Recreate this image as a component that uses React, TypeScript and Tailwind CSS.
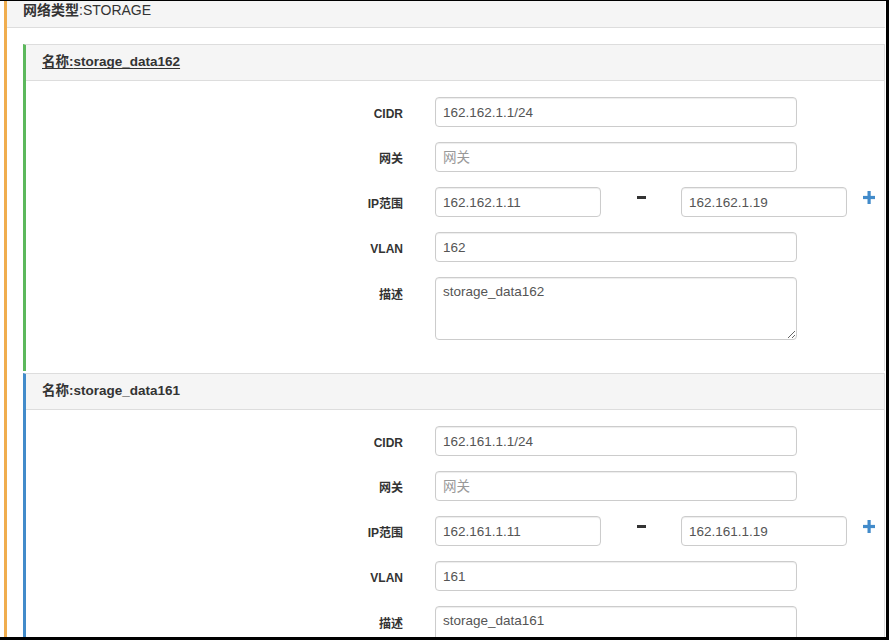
import { ReactNode } from 'react';

interface NetPanel {
  name: string;
  accent: string;
  cidr: string;
  ipStart: string;
  ipEnd: string;
  vlan: string;
  desc: string;
  underline?: boolean;
}

const PANELS: NetPanel[] = [
  {
    name: 'storage_data162',
    accent: 'border-[#5cb85c]',
    cidr: '162.162.1.1/24',
    ipStart: '162.162.1.11',
    ipEnd: '162.162.1.19',
    vlan: '162',
    desc: 'storage_data162',
    underline: true,
  },
  {
    name: 'storage_data161',
    accent: 'border-[#428bca]',
    cidr: '162.161.1.1/24',
    ipStart: '162.161.1.11',
    ipEnd: '162.161.1.19',
    vlan: '161',
    desc: 'storage_data161',
  },
];

const inputCls =
  'h-[30px] rounded-[4px] border border-[#ccc] bg-white px-[7px] text-[13.5px] text-[#555] outline-none shadow-[inset_0_1px_1px_rgba(0,0,0,0.075)] placeholder:text-[#999]';

function Row({ label, children, top }: { label: string; children: ReactNode; top?: boolean }) {
  return (
    <div className={`flex ${top ? 'items-start' : 'items-center'}`}>
      <label
        className={`w-[377px] shrink-0 text-right text-[12px] font-bold text-[#333] ${top ? 'pt-[9px]' : 'pt-[3px]'}`}
      >
        {label}
      </label>
      <div className="ml-[32px] flex items-start">{children}</div>
    </div>
  );
}

function PlusIcon() {
  return (
    <svg width="12" height="13" viewBox="0 0 12 13" className="block">
      <rect x="4.5" y="0" width="3.2" height="13" fill="#428bca" />
      <rect x="0" y="4.9" width="12" height="3.2" fill="#428bca" />
    </svg>
  );
}

function SubnetPanel({ p }: { p: NetPanel }) {
  return (
    <div className={`mb-[2px] border-l-[3px] ${p.accent} border-t border-t-[#ddd] border-r border-r-[#ddd] bg-white`}>
      <div className="flex h-[36px] items-center border-b border-[#ddd] bg-[#f5f5f5] pl-4 text-[13.5px] font-bold text-[#333]">
        <span className={p.underline ? 'underline underline-offset-2' : ''}>名称:{p.name}</span>
      </div>
      <div className="flex flex-col gap-[15px] pb-[31px] pt-4">
        <Row label="CIDR">
          <input className={`${inputCls} w-[362px]`} defaultValue={p.cidr} />
        </Row>
        <Row label="网关">
          <input className={`${inputCls} w-[362px]`} placeholder="网关" />
        </Row>
        <Row label="IP范围">
          <input className={`${inputCls} w-[166px]`} defaultValue={p.ipStart} />
          <div className="flex w-[80px] justify-center pt-[9px]">
            <div className="h-[3px] w-[9px] bg-[#333]" />
          </div>
          <input className={`${inputCls} w-[166px]`} defaultValue={p.ipEnd} />
          <div className="ml-[16px] pt-[4px]">
            <PlusIcon />
          </div>
        </Row>
        <Row label="VLAN">
          <input className={`${inputCls} w-[362px]`} defaultValue={p.vlan} />
        </Row>
        <Row label="描述" top>
          <textarea
            className={`${inputCls} h-[63px] w-[362px] resize-y py-[5px] leading-[18px]`}
            defaultValue={p.desc}
          />
        </Row>
      </div>
    </div>
  );
}

export default function App() {
  return (
    <div
      className="h-[640px] w-[889px] overflow-hidden bg-black pb-[3px] pr-[3px] pt-px"
      style={{ fontFamily: '"Liberation Sans", Arial, "Noto Sans CJK SC", sans-serif' }}
    >
      <div className="h-full overflow-hidden bg-white pl-[4px] pr-[1px]">
        <div className="h-full border-l-[3px] border-[#f0ad4e]">
          <div className="h-[27px] border-b border-[#ddd] bg-[#f5f5f5] pl-4 text-[14px] leading-[18px] text-[#333]">
            <span className="font-bold">网络类型</span>:STORAGE
          </div>
          <div className="pl-4 pt-4">
            {PANELS.map((p) => (
              <SubnetPanel key={p.name} p={p} />
            ))}
          </div>
        </div>
      </div>
    </div>
  );
}
